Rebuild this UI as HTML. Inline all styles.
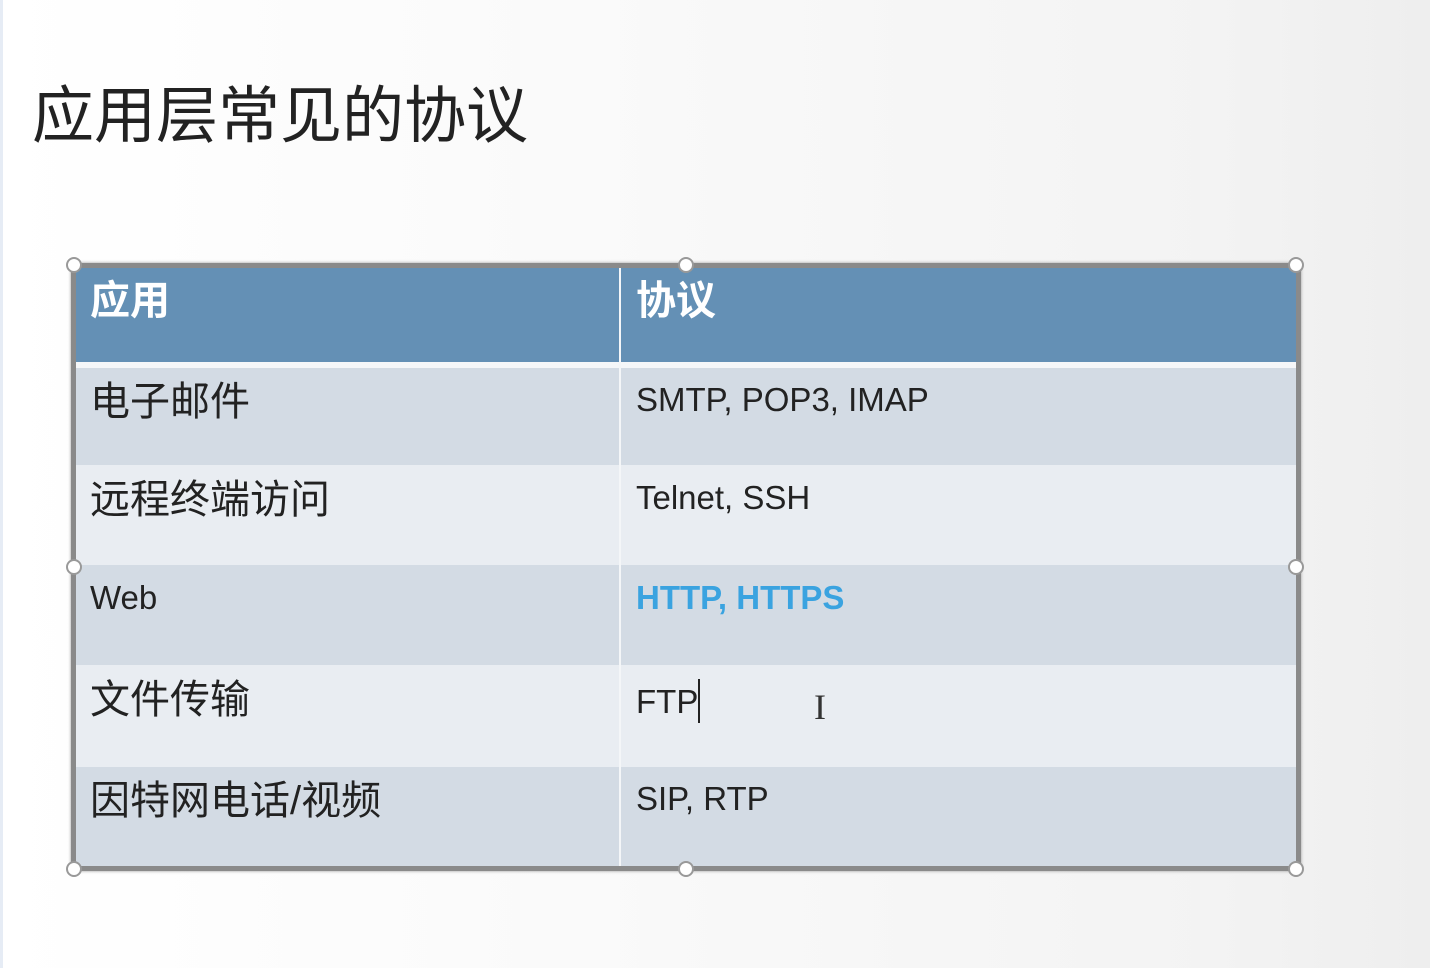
<!DOCTYPE html>
<html><head><meta charset="utf-8"><style>
body{margin:0;width:1430px;height:968px;overflow:hidden;position:relative;
background:linear-gradient(90deg,#ffffff 0%,#fafafa 40%,#f3f3f3 85%,#eeeeee 100%);
font-family:"Liberation Sans","Noto Sans CJK SC",sans-serif;}
.edge{position:absolute;left:0;top:0;width:3px;height:968px;background:#e6ecf5}
.title{position:absolute;left:32px;top:77px;font-size:62px;color:#222;letter-spacing:0;line-height:80px}
.frame{position:absolute;left:71px;top:263px;width:1230px;height:608px;background:#8a8a8a;box-shadow:0 0 3px #999}
.row{position:absolute;left:76px;width:1220px}
.c{position:absolute;top:0;height:100%;color:#222;font-size:40px;line-height:1.2}
.c1{left:0;width:543px;padding-left:14px;box-sizing:border-box}
.c2{left:545px;right:0;padding-left:15px;box-sizing:border-box}
.lat{font-size:33px;letter-spacing:0;line-height:1.2}
.h{background:#6490b5}
.h .c{color:#fff;font-weight:bold;font-size:40px}
.o{background:#d3dbe4}.e{background:#e9edf2}
.div{position:absolute;left:619px;top:268px;width:2px;height:598px;background:#f4f6f8}
.hnd{position:absolute;width:16px;height:16px;border-radius:50%;background:#fff;border:2px solid #999;box-sizing:border-box}
</style></head><body>
<div class="edge"></div>
<div class="title">应用层常见的协议</div>
<div class="frame"></div>
<div class="row h" style="top:268px;height:94px"><div class="c c1" style="padding-top:9px">应用</div><div class="c c2" style="padding-top:9px">协议</div></div>
<div class="row" style="top:362px;height:6px;background:#f5f7f9"></div>
<div class="row o" style="top:368px;height:97px"><div class="c c1" style="padding-top:10px">电子邮件</div><div class="c c2 lat" style="padding-top:12px">SMTP, POP3, IMAP</div></div>
<div class="row e" style="top:465px;height:100px"><div class="c c1" style="padding-top:11px">远程终端访问</div><div class="c c2 lat" style="padding-top:13px">Telnet, SSH</div></div>
<div class="row o" style="top:565px;height:100px"><div class="c c1 lat" style="padding-top:13px">Web</div><div class="c c2 lat" style="padding-top:13px;color:#3aa3e0;font-weight:bold">HTTP, HTTPS</div></div>
<div class="row e" style="top:665px;height:102px"><div class="c c1" style="padding-top:11px">文件传输</div><div class="c c2 lat" style="padding-top:14px">FTP<span style="display:inline-block;width:2px;height:44px;background:#222;vertical-align:-10px"></span></div></div>
<div class="row o" style="top:767px;height:99px"><div class="c c1" style="padding-top:10px">因特网电话/视频</div><div class="c c2 lat" style="padding-top:12px">SIP, RTP</div></div>
<div class="div"></div>
<div style="position:absolute;left:814px;top:686px;font-size:36px;color:#333;font-family:'Liberation Serif',serif">I</div>
<div class="hnd" style="left:66px;top:257px"></div>
<div class="hnd" style="left:678px;top:257px"></div>
<div class="hnd" style="left:1288px;top:257px"></div>
<div class="hnd" style="left:66px;top:559px"></div>
<div class="hnd" style="left:1288px;top:559px"></div>
<div class="hnd" style="left:66px;top:861px"></div>
<div class="hnd" style="left:678px;top:861px"></div>
<div class="hnd" style="left:1288px;top:861px"></div>
</body></html>
